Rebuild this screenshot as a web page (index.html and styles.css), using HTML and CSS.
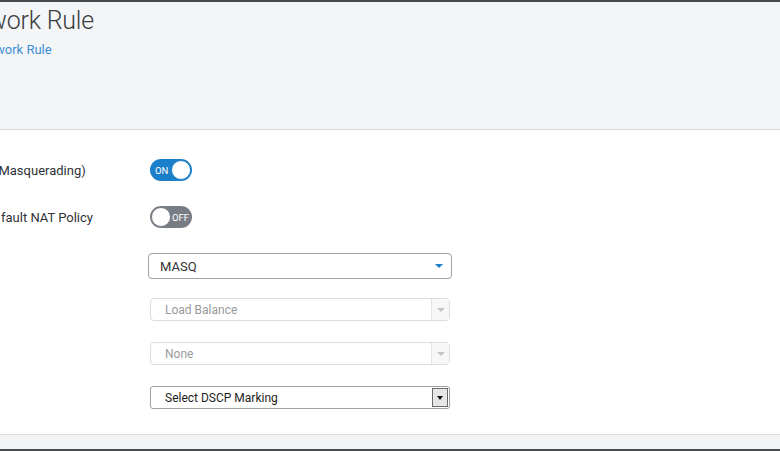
FILE: index.html
```html
<!DOCTYPE html>
<html>
<head>
<meta charset="utf-8">
<link rel="stylesheet" href="styles.css">
</head>
<body>
<div class="topbar"></div>
<header class="header">
  <h1 class="title">work Rule</h1>
  <div class="subtitle">work Rule</div>
</header>
<main class="content">
  <div class="row row-toggle">
    <div class="label lbl-masq">(Masquerading)</div>
    <div class="toggle on"><span class="tg-text">ON</span><span class="knob"></span></div>
  </div>
  <div class="row row-toggle">
    <div class="label lbl-nat">fault NAT Policy</div>
    <div class="toggle off"><span class="knob"></span><span class="tg-text">OFF</span></div>
  </div>
  <div class="row row-sel1">
    <div class="label"></div>
    <div class="select primary"><span class="sel-text">MASQ</span><span class="caret blue"></span></div>
  </div>
  <div class="row row-sel">
    <div class="label"></div>
    <div class="select disabled"><span class="sel-text">Load Balance</span><span class="sel-btn"><span class="caret light"></span></span></div>
  </div>
  <div class="row row-sel">
    <div class="label"></div>
    <div class="select disabled"><span class="sel-text">None</span><span class="sel-btn"><span class="caret light"></span></span></div>
  </div>
  <div class="row row-sel">
    <div class="label"></div>
    <div class="select native"><span class="sel-text">Select DSCP Marking</span><span class="sel-btn dark"><span class="caret black"></span></span></div>
  </div>
</main>
<footer class="footer"></footer>
<div class="bottombar"></div>
</body>
</html>
```
FILE: styles.css
```css
* { box-sizing: border-box; }
html, body { margin: 0; padding: 0; }
body {
  width: 780px;
  height: 451px;
  overflow: hidden;
  background: #ffffff;
  font-family: Roboto, "Noto Sans", sans-serif;
  color: #333;
}
.topbar { height: 2px; background: #484a4d; }
.header {
  height: 128px;
  background: #f4f5f7;
  border-bottom: 1px solid #dcdcdc;
  padding-top: 4px;
}
.title {
  margin: 0 0 0 -12px;
  font-size: 25px;
  font-weight: 300;
  color: #3a3d42;
  line-height: 30px;
  letter-spacing: -0.2px;
}
.subtitle {
  margin: 6px 0 0 -5px;
  font-size: 13px;
  color: #3c8fd4;
  line-height: 16px;
}
.content {
  height: 304px;
  padding-top: 29px;
}
.row {
  display: grid;
  grid-template-columns: 150px 1fr;
  align-items: center;
}
.row-toggle { height: 22px; margin-bottom: 25px; }
.row-toggle + .row-sel1 { margin-top: 1px; }
.row-sel1 { height: 26px; margin-bottom: 19px; }
.row-sel { height: 23px; margin-bottom: 21px; }
.label {
  font-size: 13px;
  color: #2f3237;
  white-space: nowrap;
}
.lbl-masq { margin-left: -6px; }
.lbl-nat { margin-left: 1px; }
.toggle {
  width: 42px;
  height: 22px;
  border-radius: 11px;
  display: flex;
  align-items: center;
  font-size: 9.5px;
  color: #fff;
  padding: 1px;
}
.toggle.on { background: #1c7fc9; justify-content: space-between; padding-left: 5px; }
.toggle.off { background: #787d85; padding-right: 3px; justify-content: space-between; }
.knob {
  width: 20px;
  height: 20px;
  border-radius: 50%;
  background: #fff;
}
.toggle.on .knob { border: 1.5px solid #1c7fc9; }
.toggle.off .knob { border: 1.5px solid #787d85; }
.select {
  display: flex;
  align-items: center;
  justify-content: space-between;
  font-size: 12px;
}
.select.primary {
  width: 304px;
  height: 26px;
  margin-left: -2px;
  border: 1px solid #9ea3a8;
  border-radius: 4px;
  padding: 0 8px 0 11px;
  font-size: 13px;
  color: #333;
}
.select.disabled {
  width: 300px;
  height: 23px;
  border: 1px solid #dcdcdc;
  border-radius: 4px;
  padding-left: 14px;
  color: #9a9a9a;
}
.select.native {
  width: 300px;
  height: 23px;
  border: 1px solid #a0a0a0;
  border-radius: 3px;
  padding-left: 14px;
  color: #1e1e1e;
}
.sel-btn {
  width: 18px;
  height: 21px;
  display: flex;
  align-items: center;
  justify-content: center;
  border-left: 1px solid #e2e2e2;
  background: #f7f7f7;
}
.sel-btn.dark {
  height: 19px;
  margin-right: 1px;
  border: 1px solid #6b6b6b;
  background: #e6e6e6;
  width: 16px;
}
.caret {
  width: 0;
  height: 0;
  border-left: 4px solid transparent;
  border-right: 4px solid transparent;
  border-top: 4px solid #1c7fc9;
}
.caret.light { border-top-color: #c4c4c4; }
.caret.black { border-top-color: #111; border-left-width: 3.5px; border-right-width: 3.5px; }
.footer {
  height: 15px;
  border-top: 1px solid #dcdee1;
  background: #f3f4f6;
}
.bottombar { height: 2px; background: #484a4d; }
```
